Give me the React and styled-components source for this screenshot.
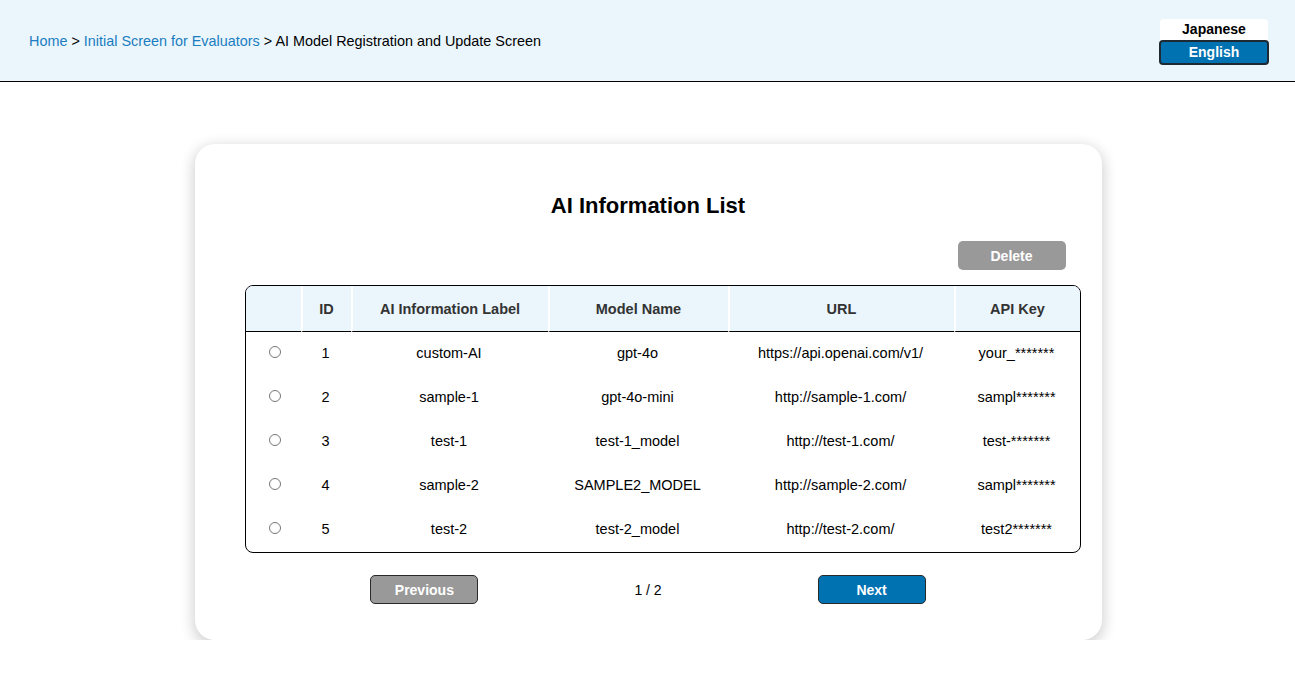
import React, { useState } from "react";
import styled, { createGlobalStyle } from "styled-components";

const GlobalStyle = createGlobalStyle`
body {
  margin: 0;
  font-family: "Liberation Sans", Arial, sans-serif;
  background: #ffffff;
  color: #000;
}
`;

const Header = styled.header`
display: flex;
flex-direction: row;
justify-content: space-between;
align-items: center;
height: 81px;
padding: 0 26px 0 29px;
background: #eaf5fc;
border-bottom: 1px solid #000;
`;

const Crumbs = styled.nav`
font-size: 14.4px;
color: #000;
padding-top: 1px;
`;

const CrumbLink = styled.a`
color: #1a7dbf;
text-decoration: none;
`;

const LangBox = styled.div`
display: flex;
flex-direction: column;
align-items: center;
width: 110px;
margin-top: 2px;
`;

const LangOption = styled.button`
width: ${(p) => (p.active ? "110px" : "108px")};
height: ${(p) => (p.active ? "25px" : "21px")};
padding: 0;
font-family: inherit;
font-size: 14px;
font-weight: bold;
color: ${(p) => (p.active ? "#fff" : "#000")};
background: ${(p) => (p.active ? "#0072b2" : "#fff")};
border: ${(p) => (p.active ? "2px solid #1d2a33" : "none")};
border-radius: ${(p) => (p.active ? "4px" : "4px 4px 0 0")};
cursor: pointer;
`;

const Main = styled.main`
display: flex;
justify-content: center;
padding: 62px 0 0 1px;
`;

const Card = styled.section`
width: 807px;
padding: 49px 50px 36px 50px;
background: #fff;
border-radius: 20px;
box-shadow: rgba(0, 0, 0, 0.18) 0px 4px 14px 2px;
`;

const Title = styled.h1`
margin: 0;
font-size: 22px;
line-height: 26px;
text-align: center;
font-weight: bold;
`;

const Toolbar = styled.div`
display: flex;
justify-content: flex-end;
padding-top: 22px;
padding-bottom: 15px;
margin-right: -14px;
`;

const Button = styled.button`
width: 108px;
height: 29px;
padding: 0;
font-family: inherit;
font-size: 14px;
font-weight: bold;
color: #fff;
background: ${(p) => (p.primary ? "#0072b2" : "#999999")};
border: ${(p) => (p.outlined ? "1px solid #2a2a2a" : "none")};
border-radius: 5px;
cursor: pointer;
`;

const Table = styled.table`
width: 836px;
table-layout: fixed;
border-collapse: separate;
border-spacing: 0;
border: 1px solid #000;
border-radius: 8px;
overflow: hidden;
font-size: 14.5px;
`;

const Th = styled.th`
height: 45px;
padding: 0;
background: #eaf5fc;
color: #333;
font-weight: bold;
text-align: center;
border-bottom: 1px solid #000;
border-left: ${(p) => (p.first ? "none" : "2px solid #fff")};
`;

const Td = styled.td`
height: 42px;
padding: 0 0 2px 0;
text-align: center;
color: #000;
`;

const Radio = styled.input`
margin: 0 0 3px 3px;
width: 12px;
height: 12px;
vertical-align: middle;
`;

const Pager = styled.div`
display: flex;
flex-direction: row;
justify-content: center;
align-items: center;
gap: 156px;
padding-top: 22px;
`;

const PageText = styled.span`
font-size: 14px;
white-space: nowrap;
`;

const rows = [
  { id: 1, label: "custom-AI", model: "gpt-4o", url: "https://api.openai.com/v1/", key: "your_*******" },
  { id: 2, label: "sample-1", model: "gpt-4o-mini", url: "http://sample-1.com/", key: "sampl*******" },
  { id: 3, label: "test-1", model: "test-1_model", url: "http://test-1.com/", key: "test-*******" },
  { id: 4, label: "sample-2", model: "SAMPLE2_MODEL", url: "http://sample-2.com/", key: "sampl*******" },
  { id: 5, label: "test-2", model: "test-2_model", url: "http://test-2.com/", key: "test2*******" },
];

export default function App() {
  const [selected, setSelected] = useState(null);

  return (
    <>
      <GlobalStyle />
      <Header>
        <Crumbs>
          <CrumbLink href="#">Home</CrumbLink> &gt;{" "}
          <CrumbLink href="#">Initial Screen for Evaluators</CrumbLink> &gt; AI Model Registration and Update Screen
        </Crumbs>
        <LangBox>
          <LangOption>Japanese</LangOption>
          <LangOption active>English</LangOption>
        </LangBox>
      </Header>

      <Main>
        <Card>
          <Title>AI Information List</Title>
          <Toolbar>
            <Button>Delete</Button>
          </Toolbar>
          <Table>
            <colgroup>
              <col style={{ width: 55 }} />
              <col style={{ width: 50 }} />
              <col style={{ width: 197 }} />
              <col style={{ width: 180 }} />
              <col style={{ width: 226 }} />
              <col style={{ width: 126 }} />
            </colgroup>
            <thead>
              <tr>
                <Th first></Th>
                <Th>ID</Th>
                <Th>AI Information Label</Th>
                <Th>Model Name</Th>
                <Th>URL</Th>
                <Th>API Key</Th>
              </tr>
            </thead>
            <tbody>
              {rows.map((r) => (
                <tr key={r.id}>
                  <Td>
                    <Radio
                      type="radio"
                      name="ai"
                      checked={selected === r.id}
                      onChange={() => setSelected(r.id)}
                    />
                  </Td>
                  <Td>{r.id}</Td>
                  <Td>{r.label}</Td>
                  <Td>{r.model}</Td>
                  <Td>{r.url}</Td>
                  <Td>{r.key}</Td>
                </tr>
              ))}
            </tbody>
          </Table>
          <Pager>
            <Button outlined>Previous</Button>
            <PageText>1 / 2</PageText>
            <Button outlined primary>Next</Button>
          </Pager>
        </Card>
      </Main>
    </>
  );
}
